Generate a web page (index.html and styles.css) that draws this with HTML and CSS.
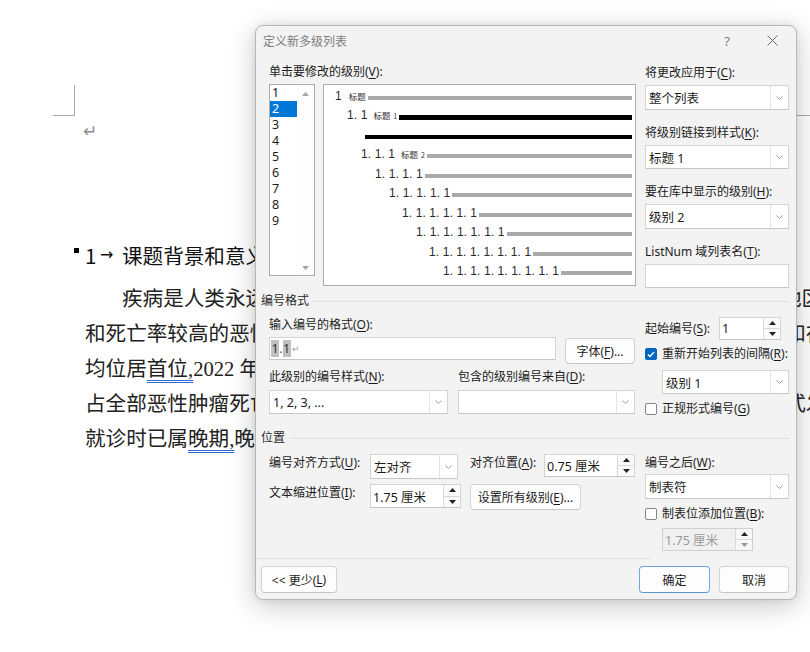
FILE: index.html
```html
<!DOCTYPE html>
<html lang="zh-CN">
<head>
<meta charset="utf-8">
<title>定义新多级列表</title>
<link rel="stylesheet" href="styles.css">
</head>
<body>
<div class="doc">
  <div class="marks"><span class="mark-l"></span><span class="mark-r"></span></div>
  <div class="ret">↵</div>
  <div class="h1"><span class="keep"></span><span class="h1num">1</span><span class="h1arr">→</span><span>课题背景和意义研究现状与发展趋势</span></div>
  <div class="body">
    <div class="ln first">疾病是人类永远无法回避的话题，肺癌也作为全球发病率最高的疾病在各地区广泛流行</div>
    <div class="ln">和死亡率较高的恶性肿瘤之一，据统计，我国肺癌的新发病人数与死亡人数之和在各类癌症中</div>
    <div class="ln">均位居<span class="u">首位,</span>2022 年我国新发肺癌病例约 106 万例，死亡病例约 73 万例，</div>
    <div class="ln">占全部恶性肿瘤死亡人数的约四分之一，由于肺癌早期症状不明显，以体检方式发现者较少</div>
    <div class="ln">就诊时已属<span class="u">晚期,</span>晚期患者的五年生存率不足百分之二十因此早期诊断尤为</div>
  </div>
</div>

<div class="dlg">
  <div class="titlebar">
    <span class="title">定义新多级列表</span>
    <span class="help">?</span>
    <span class="close"><svg width="11" height="11" viewBox="0 0 11 11"><path d="M0.5 0.5 L10.5 10.5 M10.5 0.5 L0.5 10.5" stroke="#6e6e6e" stroke-width="1" fill="none"/></svg></span>
  </div>

  <div class="top">
    <div class="levels">
      <div class="lbl">单击要修改的级别(<u>V</u>):</div>
      <div class="lvrow">
        <div class="listbox">
          <div class="items">
            <div class="it">1</div>
            <div class="it sel">2</div>
            <div class="it">3</div>
            <div class="it">4</div>
            <div class="it">5</div>
            <div class="it">6</div>
            <div class="it">7</div>
            <div class="it">8</div>
            <div class="it">9</div>
          </div>
          <div class="vscroll">
            <svg width="7" height="4" viewBox="0 0 7 4"><path d="M0 4 L3.5 0 L7 4 Z" fill="#a6a6a6"/></svg>
            <svg width="7" height="4" viewBox="0 0 7 4"><path d="M0 0 L3.5 4 L7 0 Z" fill="#a6a6a6"/></svg>
          </div>
        </div>
        <div class="preview">
          <div class="pr p0"><span class="num">1</span><span class="cap c0">标题</span><span class="bar"></span></div>
          <div class="pr p1"><span class="num">1. 1</span><span class="cap">标题 <small>1</small></span><span class="bar blk"></span></div>
          <div class="pr pw"><span class="bar blk"></span></div>
          <div class="pr p2"><span class="num">1. 1. 1</span><span class="cap">标题 <small>2</small></span><span class="bar"></span></div>
          <div class="pr p3"><span class="num">1. 1. 1. 1</span><span class="bar"></span></div>
          <div class="pr p4"><span class="num">1. 1. 1. 1. 1</span><span class="bar"></span></div>
          <div class="pr p5"><span class="num">1. 1. 1. 1. 1. 1</span><span class="bar"></span></div>
          <div class="pr p6"><span class="num">1. 1. 1. 1. 1. 1. 1</span><span class="bar"></span></div>
          <div class="pr p7"><span class="num">1. 1. 1. 1. 1. 1. 1. 1</span><span class="bar"></span></div>
          <div class="pr p8"><span class="num">1. 1. 1. 1. 1. 1. 1. 1. 1</span><span class="bar"></span></div>
        </div>
      </div>
    </div>

    <div class="side">
      <div class="field">
        <div class="lbl">将更改应用于(<u>C</u>):</div>
        <div class="combo h25"><span class="val">整个列表</span><span class="dd"><svg width="7" height="4" viewBox="0 0 7 4"><path d="M0.5 0.5 L3.5 3.5 L6.5 0.5" fill="none" stroke="#9a9a9a"/></svg></span></div>
      </div>
      <div class="field">
        <div class="lbl">将级别链接到样式(<u>K</u>):</div>
        <div class="combo h24"><span class="val">标题 1</span><span class="dd"><svg width="7" height="4" viewBox="0 0 7 4"><path d="M0.5 0.5 L3.5 3.5 L6.5 0.5" fill="none" stroke="#9a9a9a"/></svg></span></div>
      </div>
      <div class="field">
        <div class="lbl">要在库中显示的级别(<u>H</u>):</div>
        <div class="combo h25"><span class="val">级别 2</span><span class="dd"><svg width="7" height="4" viewBox="0 0 7 4"><path d="M0.5 0.5 L3.5 3.5 L6.5 0.5" fill="none" stroke="#9a9a9a"/></svg></span></div>
      </div>
      <div class="field">
        <div class="lbl">ListNum 域列表名(<u>T</u>):</div>
        <div class="textbox h24"></div>
      </div>
    </div>
  </div>

  <div class="sec"><span>编号格式</span><i></i></div>

  <div class="fmt">
    <div class="fmtl">
      <div class="lbl">输入编号的格式(<u>O</u>):</div>
      <div class="row r-input">
        <div class="textbox fmtbox"><span class="hl">1</span>.<span class="hl">1</span><span class="pm">↵</span></div>
        <div class="btn fontbtn">字体(<u>F</u>)...</div>
      </div>
      <div class="row r-lbls">
        <div class="lbl w189">此级别的编号样式(<u>N</u>):</div>
        <div class="lbl">包含的级别编号来自(<u>D</u>):</div>
      </div>
      <div class="row r-sel">
        <div class="combo h24 c179"><span class="val">1, 2, 3, ...</span><span class="dd"><svg width="7" height="4" viewBox="0 0 7 4"><path d="M0.5 0.5 L3.5 3.5 L6.5 0.5" fill="none" stroke="#9a9a9a"/></svg></span></div>
        <div class="combo h24 c177"><span class="val"></span><span class="dd"><svg width="7" height="4" viewBox="0 0 7 4"><path d="M0.5 0.5 L3.5 3.5 L6.5 0.5" fill="none" stroke="#9a9a9a"/></svg></span></div>
      </div>
    </div>
    <div class="fmtr">
      <div class="row r-start">
        <span class="lbl">起始编号(<u>S</u>):</span>
        <div class="spin s62"><span class="val">1</span><span class="sb"><span><svg width="7" height="4" viewBox="0 0 7 4"><path d="M0 4 L3.5 0 L7 4 Z" fill="#222"/></svg></span><span><svg width="7" height="4" viewBox="0 0 7 4"><path d="M0 0 L3.5 4 L7 0 Z" fill="#222"/></svg></span></span></div>
      </div>
      <div class="chk on r-chk1"><span class="cb"><svg width="8" height="7" viewBox="0 0 8 7"><path d="M1 3.5 L3 5.5 L7 1" fill="none" stroke="#fff" stroke-width="1.4"/></svg></span>重新开始列表的间隔(<u>R</u>):</div>
      <div class="combo h24 c127 r-lvl"><span class="val">级别 1</span><span class="dd"><svg width="7" height="4" viewBox="0 0 7 4"><path d="M0.5 0.5 L3.5 3.5 L6.5 0.5" fill="none" stroke="#9a9a9a"/></svg></span></div>
      <div class="chk r-chk2"><span class="cb"></span>正规形式编号(<u>G</u>)</div>
    </div>
  </div>

  <div class="sec sec2"><span>位置</span><i></i></div>

  <div class="pos">
    <div class="posl">
      <div class="row r-p1">
        <span class="lbl w101">编号对齐方式(<u>U</u>):</span>
        <div class="combo h25 c88"><span class="val">左对齐</span><span class="dd"><svg width="7" height="4" viewBox="0 0 7 4"><path d="M0.5 0.5 L3.5 3.5 L6.5 0.5" fill="none" stroke="#9a9a9a"/></svg></span></div>
        <span class="lbl w74 ml12">对齐位置(<u>A</u>):</span>
        <div class="spin s91 h23"><span class="val">0.75 厘米</span><span class="sb"><span><svg width="7" height="4" viewBox="0 0 7 4"><path d="M0 4 L3.5 0 L7 4 Z" fill="#222"/></svg></span><span><svg width="7" height="4" viewBox="0 0 7 4"><path d="M0 0 L3.5 4 L7 0 Z" fill="#222"/></svg></span></span></div>
      </div>
      <div class="row r-p2">
        <span class="lbl w101">文本缩进位置(<u>I</u>):</span>
        <div class="spin s91 h24"><span class="val">1.75 厘米</span><span class="sb"><span><svg width="7" height="4" viewBox="0 0 7 4"><path d="M0 4 L3.5 0 L7 4 Z" fill="#222"/></svg></span><span><svg width="7" height="4" viewBox="0 0 7 4"><path d="M0 0 L3.5 4 L7 0 Z" fill="#222"/></svg></span></span></div>
        <div class="btn allbtn">设置所有级别(<u>E</u>)...</div>
      </div>
    </div>
    <div class="posr">
      <div class="lbl r-after">编号之后(<u>W</u>):</div>
      <div class="combo h25 r-tab"><span class="val">制表符</span><span class="dd"><svg width="7" height="4" viewBox="0 0 7 4"><path d="M0.5 0.5 L3.5 3.5 L6.5 0.5" fill="none" stroke="#9a9a9a"/></svg></span></div>
      <div class="chk r-chk3"><span class="cb"></span>制表位添加位置(<u>B</u>):</div>
      <div class="spin s91 h23 dis r-tabpos"><span class="val">1.75 厘米</span><span class="sb"><span><svg width="7" height="4" viewBox="0 0 7 4"><path d="M0 4 L3.5 0 L7 4 Z" fill="#222"/></svg></span><span><svg width="7" height="4" viewBox="0 0 7 4"><path d="M0 0 L3.5 4 L7 0 Z" fill="#9a9a9a"/></svg></span></span></div>
    </div>
  </div>

  <div class="sep"></div>

  <div class="foot">
    <div class="btn lessbtn">&lt;&lt; 更少(<u>L</u>)</div>
    <div class="btn okbtn">确定</div>
    <div class="btn cancelbtn">取消</div>
  </div>
</div>
</body>
</html>
```

FILE: styles.css
```css
* { box-sizing: border-box; margin: 0; padding: 0; }
html, body { width: 810px; height: 652px; overflow: hidden; }
body {
  background: #ffffff;
  position: relative;
  font-family: "Noto Sans CJK SC", sans-serif;
  color: #1a1a1a;
}

/* ---------- document behind ---------- */
.doc { padding-top: 85px; width: 810px; overflow: hidden; }
.marks { display: flex; height: 31px; }
.mark-l { margin-left: 53px; width: 31px; height: 31px; border-right: 1px solid #a8a8a8; border-bottom: 1px solid #a8a8a8; }
.mark-r { margin-left: 720px; width: 20px; height: 31px; border-left: 1px solid #a8a8a8; border-bottom: 1px solid #a8a8a8; }
.ret { margin: 6px 0 0 83px; font-family: "DejaVu Sans", sans-serif; font-size: 17px; line-height: 18px; color: #8c8c8c; }

.h1 {
  margin-top: 101px;
  height: 28px;
  display: flex;
  align-items: center;
  white-space: nowrap;
  font-size: 20.6px;
  line-height: 28px;
  color: #111;
}
.keep { width: 5px; height: 5px; background: #000; margin-left: 74px; align-self: flex-start; margin-top: 7px; flex: none; }
.h1num { width: 15px; margin-left: 6px; flex: none; }
.h1arr { width: 22px; padding-left: 0; font-family: "DejaVu Sans", sans-serif; font-size: 16px; flex: none; }

.body {
  margin-top: 13px;
  padding-left: 85px;
  font-family: "Liberation Serif", "Noto Sans CJK SC", serif;
  font-size: 20.6px;
  line-height: 35px;
  white-space: nowrap;
  color: #222;
}
.ln.first { padding-left: 37px; }
.u { text-decoration: underline double #2e6bd6; text-underline-offset: 4px; text-decoration-thickness: 1px; }

/* ---------- dialog ---------- */
.dlg {
  position: absolute;
  left: 255px;
  top: 25px;
  width: 542px;
  height: 575px;
  background: #f3f3f3;
  border: 1px solid #b7b7b7;
  border-radius: 8px;
  box-shadow: 0 6px 28px rgba(0, 0, 0, 0.22), 0 0 6px rgba(0, 0, 0, 0.08);
  font-family: "Noto Sans", "Noto Sans CJK SC", sans-serif;
  font-size: 12px;
  color: #1b1b1b;
}
.dlg u { text-underline-offset: 2px; }

.titlebar { height: 29px; display: flex; align-items: center; padding-left: 7px; color: #7d7d7d; }
.title { flex: 1; font-size: 12px; }
.help { width: 44px; text-align: center; font-size: 13px; color: #7d7d7d; }
.close { width: 46px; margin-right: 1px; display: flex; justify-content: center; align-items: center; }

.lbl { line-height: 16px; white-space: nowrap; }

.top { display: flex; padding: 9px 7px 0 13px; }
.levels { width: 367px; flex: none; }
.lvrow { display: flex; align-items: flex-start; margin-top: 4px; }

.listbox { width: 46px; height: 192px; border: 1px solid #adadad; background: #fff; display: flex; }
.items { width: 27px; }
.it { height: 16px; line-height: 16px; padding-left: 2px; font-size: 12.5px; color: #1b1b1b; }
.it.sel { background: #0078d7; color: #fff; }
.vscroll { flex: 1; display: flex; flex-direction: column; justify-content: space-between; align-items: center; padding: 7px 0 5px; background: #fdfdfd; }

.preview { width: 313px; height: 202px; margin-left: 8px; background: #fff; border: 1px solid #adadad; padding: 1px 3px 0 0; }
.pr { display: flex; align-items: center; height: 19.5px; white-space: nowrap; }
.num { font-family: "Liberation Sans", sans-serif; font-size: 12px; letter-spacing: 0.1px; color: #2a2a2a; }
.cap { font-family: "Noto Sans CJK SC", sans-serif; font-size: 8.5px; color: #303030; margin-left: 6px; }
.cap.c0 { margin-left: 7px; }
.cap small { font-size: 7px; margin-left: 1px; }
.bar { flex: 1; height: 4px; background: #a9a9a9; margin-left: 2px; margin-top: 4px; }
.bar.blk { background: #000; height: 4.5px; }
.p0 { padding-left: 11px; }
.p1 { padding-left: 23px; }
.pw { padding-left: 39px; }
.p2 { padding-left: 37px; }
.p3 { padding-left: 51px; }
.p4 { padding-left: 65px; }
.p5 { padding-left: 78px; }
.p6 { padding-left: 92px; }
.p7 { padding-left: 105px; }
.p8 { padding-left: 119px; }

.side { width: 144px; margin-left: 9px; padding-top: 1px; display: flex; flex-direction: column; gap: 15px; flex: none; }
.field .combo, .field .textbox { margin-top: 4px; }

.combo { display: flex; background: #fff; border: 1px solid #d4d4d4; border-bottom-color: #c6c6c6; }
.combo .val { flex: 1; display: flex; align-items: center; padding-left: 3px; font-size: 12.5px; white-space: nowrap; overflow: hidden; }
.combo .dd { width: 18px; border-left: 1px solid #e3e3e3; display: flex; align-items: center; justify-content: center; }
.textbox { background: #fff; border: 1px solid #d4d4d4; border-bottom-color: #c6c6c6; }
.h23 { height: 23px; }
.h24 { height: 24px; }
.h25 { height: 25px; }

.sec { display: flex; align-items: center; padding: 0 7px 0 5px; margin-top: 5px; line-height: 16px; color: #2a2a2a; }
.sec i { flex: 1; border-top: 1px solid #e0e0e0; margin-left: 3px; height: 0; }
.sec2 { margin-top: 13px; }
.sec2 i { margin-left: 5px; }

.row { display: flex; align-items: flex-start; }

.fmt { display: flex; padding: 8px 7px 0 13px; }
.fmtl { width: 366px; flex: none; }
.r-input { margin-top: 4px; }
.fmtbox { width: 287px; height: 23px; display: flex; align-items: center; padding-left: 1px; font-size: 12.5px; color: #555; }
.hl { background: #c0c0c0; color: #333; padding: 0 0.5px; }
.pm { font-size: 9px; color: #9a9a9a; margin-left: 1px; }
.btn { display: flex; align-items: center; justify-content: center; background: #fdfdfd; border: 1px solid #d2d2d2; border-bottom-color: #c4c4c4; border-radius: 4px; white-space: nowrap; font-size: 12px; }
.fontbtn { width: 70px; height: 26px; margin: 1px 0 0 9px; }
.r-lbls { margin-top: 5px; }
.w189 { width: 189px; }
.r-sel { margin-top: 5px; }
.c179 { width: 179px; }
.c177 { width: 177px; margin-left: 10px; }

.fmtr { width: 144px; margin-left: 10px; flex: none; }
.r-start { align-items: center; height: 23px; }
.r-start .lbl { flex: 1; }
.spin { display: flex; background: #fff; border: 1px solid #d4d4d4; border-bottom-color: #c6c6c6; }
.spin .val { flex: 1; display: flex; align-items: center; padding-left: 2px; font-size: 12.5px; white-space: nowrap; }
.s62 { width: 62px; height: 23px; margin-right: 8px; }
.s91 { width: 91px; }
.sb { width: 17px; display: flex; flex-direction: column; border-left: 1px solid #dadada; background: #fafafa; }
.sb span { flex: 1; display: flex; align-items: center; justify-content: center; }
.sb span + span { border-top: 1px solid #dadada; }

.chk { display: flex; align-items: center; line-height: 16px; white-space: nowrap; }
.cb { width: 12px; height: 12px; border: 1px solid #858585; border-radius: 2px; background: #fff; margin-right: 5px; display: flex; align-items: center; justify-content: center; flex: none; }
.chk.on .cb { background: #0067c0; border-color: #0067c0; }
.r-chk1 { margin-top: 6px; }
.r-lvl { margin: 8px 0 0 17px; width: 127px; }
.c127 { width: 127px; }
.r-chk2 { margin-top: 7px; }

.pos { display: flex; padding: 8px 7px 0 13px; }
.posl { width: 366px; flex: none; }
.w101 { width: 101px; margin-top: 1px; }
.w74 { width: 74px; margin-top: 1px; }
.ml12 { margin-left: 12px; }
.c88 { width: 88px; }
.r-p2 { margin-top: 5px; }
.allbtn { width: 111px; height: 26px; margin-left: 9px; }

.posr { width: 144px; margin-left: 10px; flex: none; }
.r-after { margin-top: 1px; }
.r-tab { margin-top: 3px; }
.r-chk3 { margin-top: 7px; }
.r-tabpos { margin: 6px 0 0 17px; }
.spin.dis { background: #f0f0f0; border-color: #cfcfcf; }
.spin.dis .val { color: #9a9a9a; }
.spin.dis .sb { background: #f7f7f7; }

.sep { width: 394px; border-top: 1px solid #dedede; margin-top: 7px; }

.foot { display: flex; padding: 7px 7px 0 5px; }
.lessbtn { width: 76px; height: 27px; }
.okbtn { width: 71px; height: 27px; margin-left: auto; border-color: #6aa7e6; border-bottom-color: #5a97d6; }
.cancelbtn { width: 70px; height: 27px; margin-left: 9px; }
```
